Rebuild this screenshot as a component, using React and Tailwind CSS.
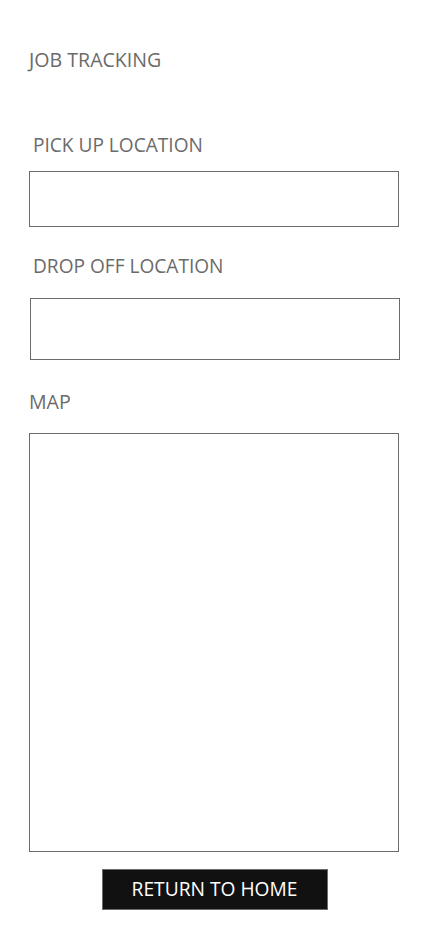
import React from "react";

const Label = ({ children, className = "" }) => (
  <div className={`leading-[19px] text-[#6b6b6b] ${className}`}>{children}</div>
);

const App = () => {
  return (
    <div className="min-h-[926px] w-[428px] bg-white font-['Open_Sans',sans-serif]">
      <div className="flex flex-col pl-[29px] pr-[29px] pt-[50px]">
        <Label className="text-[19.6px]">JOB TRACKING</Label>

        <Label className="ml-[4px] mt-[67px] text-[19.1px]">PICK UP LOCATION</Label>
        <input
          type="text"
          className="mt-[16px] h-[56px] w-[370px] border border-[#6b6b6b] bg-white outline-none"
        />

        <Label className="ml-[4px] mt-[30px] text-[19.1px]">DROP OFF LOCATION</Label>
        <input
          type="text"
          className="ml-[1px] mt-[22px] h-[62px] w-[370px] border border-[#6b6b6b] bg-white outline-none"
        />

        <Label className="mt-[32px] text-[19.6px]">MAP</Label>
        <div className="mt-[22px] h-[419px] w-[370px] border border-[#6b6b6b] bg-white" />

        <div className="mt-[17px] flex justify-center">
          <button
            type="button"
            className="ml-[1px] h-[41px] w-[226px] border border-[#6b6b6b] bg-[#111111] text-[19.2px] text-white"
          >
            RETURN TO HOME
          </button>
        </div>
      </div>
    </div>
  );
};

export default App;
